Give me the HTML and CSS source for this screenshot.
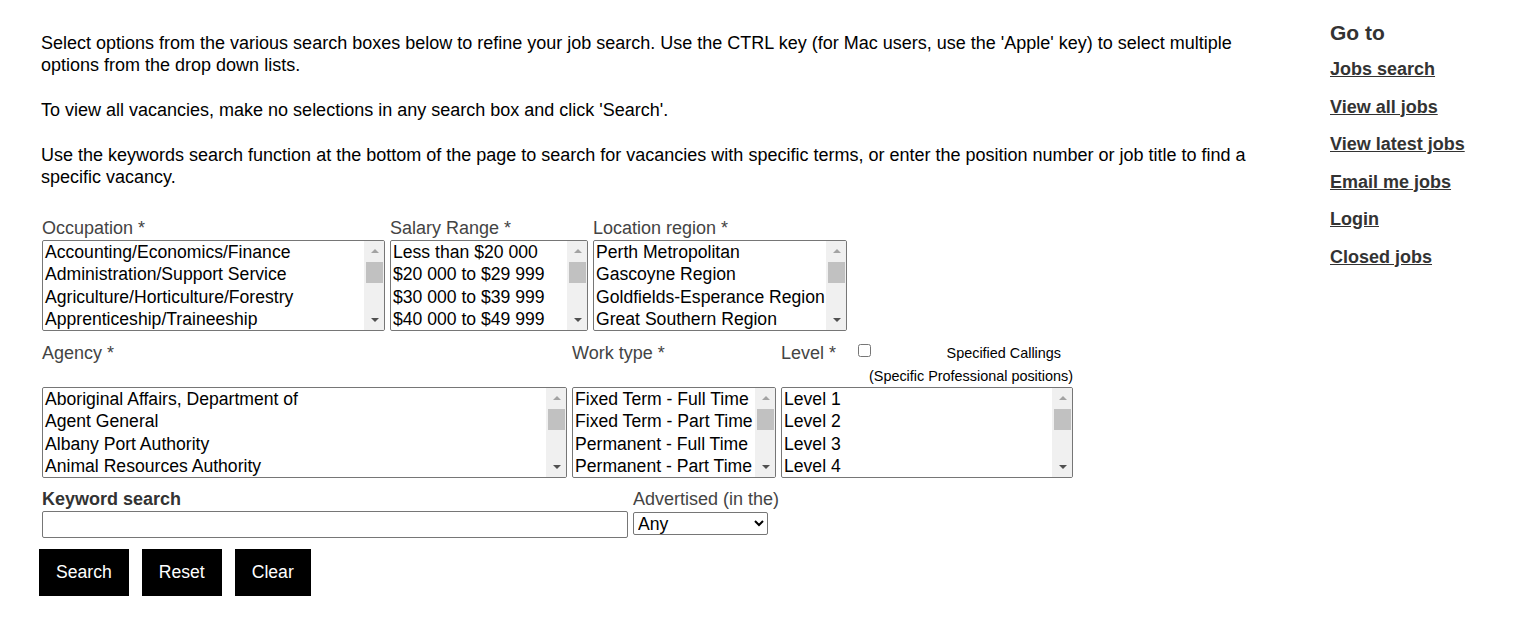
FILE: index.html
```html
<!DOCTYPE html>
<html lang="en">
<head>
  <meta charset="UTF-8">
  <title>Jobs search</title>
  <link rel="stylesheet" href="styles.css">
</head>
<body>
  <div class="page">
    <div class="main">
      <p>Select options from the various search boxes below to refine your job search. Use the CTRL key (for Mac users, use the 'Apple' key) to select multiple options from the drop down lists.</p>
      <p>To view all vacancies, make no selections in any search box and click 'Search'.</p>
      <p>Use the keywords search function at the bottom of the page to search for vacancies with specific terms, or enter the position number or job title to find a specific vacancy.</p>

      <form class="search-form" onsubmit="return false;">
        <div class="form-row row-one">
          <div class="field">
            <label for="occupation">Occupation *</label>
            <div class="listbox occupation">
              <select id="occupation" class="list" multiple size="4">
                <option>Accounting/Economics/Finance</option>
                <option>Administration/Support Service</option>
                <option>Agriculture/Horticulture/Forestry</option>
                <option>Apprenticeship/Traineeship</option>
                <option>Arts/Culture/Heritage</option>
                <option>Community Services</option>
                <option>Construction/Building</option>
              </select>
              <div class="scrollbar"><span class="sb-btn sb-up"></span><span class="sb-thumb"></span><span class="sb-btn sb-down"></span></div>
            </div>
          </div>
          <div class="field">
            <label for="salary">Salary Range *</label>
            <div class="listbox salary">
              <select id="salary" class="list" multiple size="4">
                <option>Less than $20 000</option>
                <option>$20 000 to $29 999</option>
                <option>$30 000 to $39 999</option>
                <option>$40 000 to $49 999</option>
                <option>$50 000 to $59 999</option>
                <option>$60 000 to $69 999</option>
                <option>$70 000 to $79 999</option>
              </select>
              <div class="scrollbar"><span class="sb-btn sb-up"></span><span class="sb-thumb"></span><span class="sb-btn sb-down"></span></div>
            </div>
          </div>
          <div class="field">
            <label for="location">Location region *</label>
            <div class="listbox location">
              <select id="location" class="list" multiple size="4">
                <option>Perth Metropolitan</option>
                <option>Gascoyne Region</option>
                <option>Goldfields-Esperance Region</option>
                <option>Great Southern Region</option>
                <option>Kimberley Region</option>
                <option>Mid West Region</option>
                <option>Peel Region</option>
              </select>
              <div class="scrollbar"><span class="sb-btn sb-up"></span><span class="sb-thumb"></span><span class="sb-btn sb-down"></span></div>
            </div>
          </div>
        </div>

        <div class="form-row row-two">
          <div class="field">
            <div class="field-head">
              <label for="agency">Agency *</label>
            </div>
            <div class="listbox agency">
              <select id="agency" class="list" multiple size="4">
                <option>Aboriginal Affairs, Department of</option>
                <option>Agent General</option>
                <option>Albany Port Authority</option>
                <option>Animal Resources Authority</option>
                <option>Art Gallery of Western Australia</option>
                <option>Attorney General, Department of the</option>
                <option>Botanic Gardens and Parks Authority</option>
              </select>
              <div class="scrollbar"><span class="sb-btn sb-up"></span><span class="sb-thumb"></span><span class="sb-btn sb-down"></span></div>
            </div>
          </div>
          <div class="field">
            <div class="field-head">
              <label for="worktype">Work type *</label>
            </div>
            <div class="listbox worktype">
              <select id="worktype" class="list" multiple size="4">
                <option>Fixed Term - Full Time</option>
                <option>Fixed Term - Part Time</option>
                <option>Permanent - Full Time</option>
                <option>Permanent - Part Time</option>
                <option>Casual</option>
                <option>Sessional</option>
                <option>Contract</option>
              </select>
              <div class="scrollbar"><span class="sb-btn sb-up"></span><span class="sb-thumb"></span><span class="sb-btn sb-down"></span></div>
            </div>
          </div>
          <div class="field">
            <div class="field-head">
              <div class="level-line">
                <label for="level">Level *</label>
                <input type="checkbox" id="callings" class="callings-box">
                <label for="callings" class="callings-label">Specified Callings</label>
              </div>
              <div class="callings-note">(Specific Professional positions)</div>
            </div>
            <div class="listbox level">
              <select id="level" class="list" multiple size="4">
                <option>Level 1</option>
                <option>Level 2</option>
                <option>Level 3</option>
                <option>Level 4</option>
                <option>Level 5</option>
                <option>Level 6</option>
                <option>Level 7</option>
              </select>
              <div class="scrollbar"><span class="sb-btn sb-up"></span><span class="sb-thumb"></span><span class="sb-btn sb-down"></span></div>
            </div>
          </div>
        </div>

        <div class="form-row row-three">
          <div class="field">
            <label for="keyword" class="strong">Keyword search</label>
            <input type="text" id="keyword" class="keyword">
          </div>
          <div class="field">
            <label for="advertised">Advertised (in the)</label>
            <select id="advertised" class="advertised">
              <option>Any</option>
              <option>Last day</option>
              <option>Last week</option>
              <option>Last month</option>
            </select>
          </div>
        </div>

        <div class="buttons">
          <button type="submit" class="btn">Search</button>
          <button type="reset" class="btn">Reset</button>
          <button type="button" class="btn">Clear</button>
        </div>
      </form>
    </div>

    <div class="sidebar">
      <h2>Go to</h2>
      <ul class="goto">
        <li><a href="#">Jobs search</a></li>
        <li><a href="#">View all jobs</a></li>
        <li><a href="#">View latest jobs</a></li>
        <li><a href="#">Email me jobs</a></li>
        <li><a href="#">Login</a></li>
        <li><a href="#">Closed jobs</a></li>
      </ul>
    </div>
  </div>
</body>
</html>
```

FILE: styles.css
```css
body {
  margin: 0;
  background-color: #fff;
  color: #000;
  font-family: "Liberation Sans", Arial, sans-serif;
}

.page {
  display: flex;
  align-items: flex-start;
}

.main {
  width: 1210px;
  padding: 32px 0 0 41px;
}

.main p {
  margin: 0 0 23px;
  font-size: 18px;
  line-height: 22px;
}

.search-form {
  margin-top: 30px;
}

.form-row {
  display: flex;
  align-items: flex-start;
  gap: 5px;
  padding-left: 1px;
}

.field {
  display: flex;
  flex-direction: column;
  align-items: flex-start;
}

label {
  font-size: 18px;
  line-height: 21px;
  color: #444;
}

label.strong {
  font-weight: bold;
  color: #333;
}

/* list boxes: border on the wrapper, drawn scrollbar beside the select */
.listbox {
  display: flex;
  box-sizing: border-box;
  height: 91px;
  border: 1px solid #767676;
  border-radius: 2px;
  overflow: hidden;
}

.list {
  flex: 1;
  min-width: 0;
  box-sizing: border-box;
  height: 89px;
  margin: 0;
  padding: 1px 0 0;
  border: none;
  outline: none;
  overflow: hidden;
  font-family: "Liberation Sans", Arial, sans-serif;
  font-size: 17.6px;
  color: #000;
}

.list option {
  padding: 0 2px;
  line-height: 22.3px;
  height: 22.3px;
}

.scrollbar {
  display: flex;
  flex-direction: column;
  width: 20px;
  flex-shrink: 0;
  background-color: #f0f0f0;
}

.sb-btn {
  display: flex;
  align-items: center;
  justify-content: center;
  height: 20px;
  padding-left: 1px;
}

.sb-btn::before {
  content: "";
  border-left: 4px solid transparent;
  border-right: 4px solid transparent;
}

.sb-up::before {
  border-bottom: 4px solid #a3a3a3;
}

.sb-down {
  margin-top: auto;
}

.sb-down::before {
  border-top: 4px solid #505050;
}

.sb-thumb {
  height: 21px;
  margin: 1px 1px 0 2px;
  background-color: #c1c1c1;
}

.occupation { width: 343px; }
.salary { width: 198px; }
.location { width: 254px; }
.agency { width: 525px; }
.worktype { width: 204px; }
.level { width: 292px; }

.row-one label {
  margin-bottom: 1px;
}

.row-two {
  margin-top: 12px;
}

.field-head {
  height: 44px;
  width: 100%;
}

.field-head label {
  display: block;
}

.level-line {
  display: flex;
  align-items: center;
}

.level-line label {
  display: inline;
}

.callings-box {
  width: 13px;
  height: 13px;
  margin: -6px 0 0 22px;
}

.level-line .callings-label {
  margin: 0 12px 0 auto;
  font-size: 14.4px;
  color: #000;
}

.callings-note {
  margin-top: 3px;
  text-align: right;
  font-size: 14.4px;
  line-height: 18px;
  color: #000;
}

.row-three {
  margin-top: 11px;
}

.keyword {
  box-sizing: border-box;
  width: 586px;
  height: 27px;
  margin: 1px 0 0;
  border: 1px solid #767676;
  border-radius: 2px;
  font-size: 16px;
}

.advertised {
  box-sizing: border-box;
  width: 135px;
  height: 23px;
  margin: 2px 0 0;
  border: 1px solid #767676;
  border-radius: 2px;
  background-color: #fff;
  font-family: "Liberation Sans", Arial, sans-serif;
  font-size: 17.6px;
  color: #000;
}

.buttons {
  display: flex;
  gap: 13px;
  margin: 11px 0 0 -2px;
}

.btn {
  height: 47px;
  padding: 0 17px;
  border: none;
  background-color: #000;
  color: #fff;
  font-family: "Liberation Sans", Arial, sans-serif;
  font-size: 17.6px;
  cursor: pointer;
}

.sidebar {
  margin-left: 79px;
  padding-top: 21px;
}

.sidebar h2 {
  margin: 0;
  font-size: 21px;
  line-height: 24px;
  color: #333;
}

.goto {
  list-style: none;
  margin: 0;
  padding: 0;
}

.goto li {
  margin-top: 16.5px;
  font-size: 18px;
  line-height: 21px;
}

.goto li:first-child {
  margin-top: 14px;
}

.goto a {
  font-weight: bold;
  color: #333;
  text-decoration: underline;
}
```
